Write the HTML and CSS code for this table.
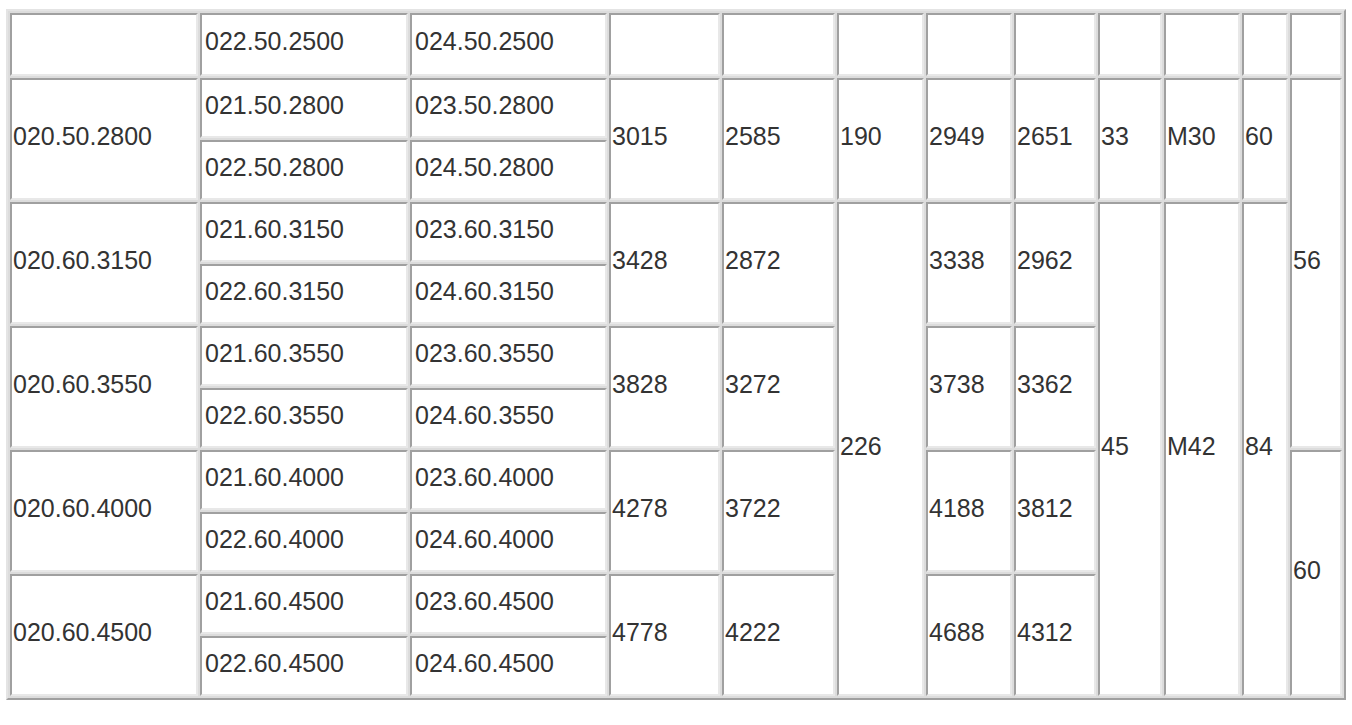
FILE: index.html
```html
<!DOCTYPE html>
<html>
<head>
  <title>Slewing Ring Dimensions</title>
  <meta charset="UTF-8">
  <link rel="stylesheet" href="styles.css">
</head>
<body>
  <table class="dims">
    <colgroup>
      <col class="c1"><col class="c2"><col class="c3"><col class="c4">
      <col class="c5"><col class="c6"><col class="c7"><col class="c8">
      <col class="c9"><col class="c10"><col class="c11"><col class="c12">
    </colgroup>
    <tr class="first">
      <td></td>
      <td class="code">022.50.2500</td>
      <td class="code">024.50.2500</td>
      <td></td><td></td><td></td><td></td><td></td><td></td><td></td><td></td><td></td>
    </tr>

    <tr>
      <td rowspan="2">020.50.2800</td>
      <td class="code">021.50.2800</td>
      <td class="code">023.50.2800</td>
      <td rowspan="2">3015</td>
      <td rowspan="2">2585</td>
      <td rowspan="2">190</td>
      <td rowspan="2">2949</td>
      <td rowspan="2">2651</td>
      <td rowspan="2">33</td>
      <td rowspan="2">M30</td>
      <td rowspan="2">60</td>
      <td rowspan="6">56</td>
    </tr>
    <tr>
      <td class="code">022.50.2800</td>
      <td class="code">024.50.2800</td>
    </tr>

    <tr>
      <td rowspan="2">020.60.3150</td>
      <td class="code">021.60.3150</td>
      <td class="code">023.60.3150</td>
      <td rowspan="2">3428</td>
      <td rowspan="2">2872</td>
      <td rowspan="8">226</td>
      <td rowspan="2">3338</td>
      <td rowspan="2">2962</td>
      <td rowspan="8">45</td>
      <td rowspan="8">M42</td>
      <td rowspan="8">84</td>
    </tr>
    <tr>
      <td class="code">022.60.3150</td>
      <td class="code">024.60.3150</td>
    </tr>

    <tr>
      <td rowspan="2">020.60.3550</td>
      <td class="code">021.60.3550</td>
      <td class="code">023.60.3550</td>
      <td rowspan="2">3828</td>
      <td rowspan="2">3272</td>
      <td rowspan="2">3738</td>
      <td rowspan="2">3362</td>
    </tr>
    <tr>
      <td class="code">022.60.3550</td>
      <td class="code">024.60.3550</td>
    </tr>

    <tr>
      <td rowspan="2">020.60.4000</td>
      <td class="code">021.60.4000</td>
      <td class="code">023.60.4000</td>
      <td rowspan="2">4278</td>
      <td rowspan="2">3722</td>
      <td rowspan="2">4188</td>
      <td rowspan="2">3812</td>
      <td rowspan="4">60</td>
    </tr>
    <tr>
      <td class="code">022.60.4000</td>
      <td class="code">024.60.4000</td>
    </tr>

    <tr>
      <td rowspan="2">020.60.4500</td>
      <td class="code">021.60.4500</td>
      <td class="code">023.60.4500</td>
      <td rowspan="2">4778</td>
      <td rowspan="2">4222</td>
      <td rowspan="2">4688</td>
      <td rowspan="2">4312</td>
    </tr>
    <tr>
      <td class="code">022.60.4500</td>
      <td class="code">024.60.4500</td>
    </tr>
  </table>
</body>
</html>
```

FILE: styles.css
```css
body {
  margin: 0;
  background-color: #ffffff;
  font-family: 'Liberation Sans', Arial, sans-serif;
}

.dims {
  margin: 9px 0 0 6px;
  width: 1340px;
  table-layout: fixed;
  border-collapse: separate;
  border-spacing: 2px;
  border-style: solid;
  border-width: 2px;
  border-color: #e4e4e4 #a0a0a0 #a0a0a0 #e4e4e4;
  background-color: #dcdcdc;
}

.c1 { width: 188px; }
.c2 { width: 208px; }
.c3 { width: 197px; }
.c4 { width: 111px; }
.c5 { width: 113px; }
.c6 { width: 87px; }
.c7 { width: 86px; }
.c8 { width: 82px; }
.c9 { width: 64px; }
.c10 { width: 76px; }
.c11 { width: 46px; }
.c12 { width: 52px; }

.dims tr {
  height: 60px;
}

.dims tr.first {
  height: 63px;
}

.dims td {
  box-sizing: border-box;
  padding: 0 0 6px 1px;
  border-style: solid;
  border-width: 2px;
  border-color: #a0a0a0 #e8e8e8 #e8e8e8 #a0a0a0;
  background-color: #ffffff;
  color: #333333;
  font-size: 25px;
  vertical-align: middle;
  white-space: nowrap;
  overflow: hidden;
}

.dims td.code {
  padding-left: 3px;
}
```
